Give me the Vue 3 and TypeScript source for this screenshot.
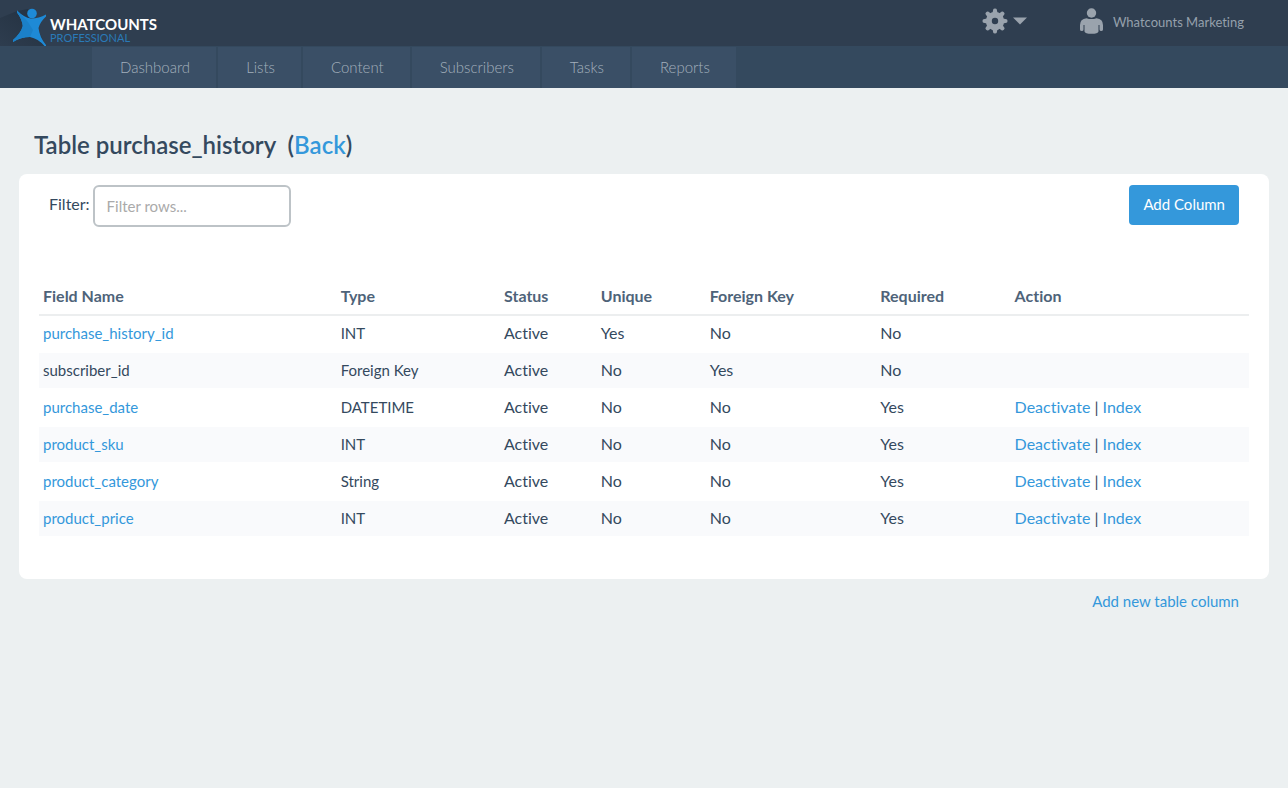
<script setup lang="ts">
import { computed, ref } from 'vue'

interface Field {
  name: string
  type: string
  unique: string
  foreign: string
  required: string
  linked: boolean
  actions: boolean
}

const navItems: string[] = ['Dashboard', 'Lists', 'Content', 'Subscribers', 'Tasks', 'Reports']
const headings: string[] = ['Field Name', 'Type', 'Status', 'Unique', 'Foreign Key', 'Required', 'Action']

const fields: Field[] = [
  { name: 'purchase_history_id', type: 'INT', unique: 'Yes', foreign: 'No', required: 'No', linked: true, actions: false },
  { name: 'subscriber_id', type: 'Foreign Key', unique: 'No', foreign: 'Yes', required: 'No', linked: false, actions: false },
  { name: 'purchase_date', type: 'DATETIME', unique: 'No', foreign: 'No', required: 'Yes', linked: true, actions: true },
  { name: 'product_sku', type: 'INT', unique: 'No', foreign: 'No', required: 'Yes', linked: true, actions: true },
  { name: 'product_category', type: 'String', unique: 'No', foreign: 'No', required: 'Yes', linked: true, actions: true },
  { name: 'product_price', type: 'INT', unique: 'No', foreign: 'No', required: 'Yes', linked: true, actions: true },
]

const filter = ref('')
const rows = computed(() =>
  fields.filter((f) => `${f.name} ${f.type}`.toLowerCase().includes(filter.value.toLowerCase())),
)
</script>

<template>
  <div class="page">
    <header class="topbar">
      <a href="#" class="brand" aria-label="WhatCounts Professional">
        <svg class="mark" width="50" height="46" viewBox="0 0 50 46" aria-hidden="true">
          <defs>
            <linearGradient id="shade" x1="1" y1="0" x2="0" y2="1">
              <stop offset="0" stop-color="#1d2a38" stop-opacity="0.7" />
              <stop offset="1" stop-color="#1d2a38" stop-opacity="0.05" />
            </linearGradient>
          </defs>
          <path d="M0 18L17 11L28 9L46 46H0Z" fill="url(#shade)" />
          <circle cx="32" cy="13.5" r="4.800" fill="#1e8ad6" />
          <path d="M17 10.500Q24 17.500 31 18.500Q39 18.500 46 14.500V16.500Q40 22 38.500 28Q39.500 37 46 45V46H44.500Q38 38.500 30 37Q21 37 13 42V40Q21 33 22.800 26Q22 19 17 12.500Z" fill="#1e8ad6" />
          <path d="M17 10.500Q24 17.500 28 22L33 30L30 37Q21 37 13 42V40Q21 33 22.800 26Q22 19 17 12.500Z" fill="#1b80c8" />
        </svg>
        <span class="wordmark">
          <span class="brand-name">WHATCOUNTS</span>
          <span class="brand-tier">PROFESSIONAL</span>
        </span>
      </a>
      <div class="tools">
        <button type="button" class="settings" aria-label="Settings">
          <svg width="26" height="26" viewBox="0 0 26 26" aria-hidden="true">
            <g fill="#9aa3ad">
              <path fill-rule="evenodd" d="M13 3.800a9.200 9.200 0 1 0 0 18.400a9.200 9.200 0 1 0 0-18.400ZM13 9.800a3.200 3.200 0 1 1 0 6.400a3.200 3.200 0 1 1 0-6.400Z" />
              <path v-for="n in 8" :key="n" d="M10.300 6L11.200 1.500Q11.400 .5 13 .5T14.800 1.500L15.700 6Z" :transform="`rotate(${n * 45} 13 13)`" />
            </g>
          </svg>
          <svg width="14" height="8" viewBox="0 0 14 8" aria-hidden="true">
            <path d="M0 .5H14L7 7.500Z" fill="#9aa3ad" />
          </svg>
        </button>
        <a href="#" class="account">
          <svg width="24" height="26" viewBox="0 0 24 26" aria-hidden="true">
            <g fill="#9aa3ad">
              <circle cx="11.500" cy="5" r="4.700" />
              <path d="M6.500 10.200Q0 11 0 17V21.500Q0 23 1.800 23T3.500 21.500V17H4.500V23.500Q5 25.800 11.500 25.800T18.500 23.500V17H19.500V21.500Q19.500 23 21.200 23T23 21.500V17Q23 11 16.500 10.200Q11.500 12 6.500 10.200Z" />
            </g>
          </svg>
          <span>Whatcounts Marketing</span>
        </a>
      </div>
    </header>

    <nav class="nav">
      <a v-for="item in navItems" :key="item" href="#">{{ item }}</a>
    </nav>

    <main class="content">
      <h1>Table purchase_history&nbsp; (<a href="#">Back</a>)</h1>

      <section class="panel">
        <div class="toolbar">
          <div class="filter">
            <label for="filter">Filter:</label>
            <input id="filter" v-model="filter" type="text" placeholder="Filter rows..." />
          </div>
          <button type="button" class="add">Add Column</button>
        </div>

        <table>
          <colgroup>
            <col class="c-name" />
            <col class="c-type" />
            <col class="c-status" />
            <col class="c-unique" />
            <col class="c-foreign" />
            <col class="c-required" />
            <col />
          </colgroup>
          <thead>
            <tr>
              <th v-for="h in headings" :key="h" scope="col">{{ h }}</th>
            </tr>
          </thead>
          <tbody>
            <tr v-for="f in rows" :key="f.name">
              <td class="compact">
                <a v-if="f.linked" href="#">{{ f.name }}</a>
                <template v-else>{{ f.name }}</template>
              </td>
              <td class="compact">{{ f.type }}</td>
              <td>Active</td>
              <td>{{ f.unique }}</td>
              <td>{{ f.foreign }}</td>
              <td>{{ f.required }}</td>
              <td>
                <template v-if="f.actions"><a href="#">Deactivate</a> | <a href="#">Index</a></template>
              </td>
            </tr>
          </tbody>
        </table>
      </section>

      <div class="below">
        <a href="#">Add new table column</a>
      </div>
    </main>
  </div>
</template>

<style>
body {
  background: #ecf0f1;
}
</style>

<style scoped>
.page {
  font-family: Lato, "Liberation Sans", sans-serif;
  font-size: 16px;
  font-variant-ligatures: none;
  line-height: 20px;
  color: #34495e;
}

a {
  color: #3498db;
  text-decoration: none;
}

.topbar {
  display: flex;
  justify-content: space-between;
  height: 46px;
  background: #2f3e50;
}

.brand {
  display: flex;
}

.wordmark {
  display: flex;
  flex-direction: column;
  padding-top: 16px;
}

.brand-name {
  font-size: 15px;
  font-weight: 700;
  line-height: 16px;
  color: #fff;
}

.brand-tier {
  font-size: 11px;
  line-height: 11px;
  color: #2a7ab8;
}

.tools {
  display: flex;
  align-items: center;
  gap: 53px;
  padding: 0 44px 4px 0;
}

.settings {
  display: flex;
  align-items: center;
  gap: 5px;
  padding: 0;
  border: 0;
  background: none;
}

.account {
  display: flex;
  align-items: center;
  gap: 9px;
  font-size: 13px;
  color: #95a0ac;
}

.account span {
  padding-top: 2px;
}

.nav {
  display: flex;
  gap: 2px;
  padding: 1px 0 0 92px;
  background: #34495e;
}

.nav a {
  padding: 10px 26px 11px 28px;
  background: #3a4f66;
  font-size: 15px;
  font-weight: 300;
  color: #a3b0bc;
}

.content {
  padding: 40px 19px 0;
}

h1 {
  margin: 0 0 12px;
  padding-left: 15px;
  font-size: 24px;
  font-weight: 600;
  line-height: 34px;
}

.panel {
  padding: 11px 20px 41px;
  border-radius: 8px;
  background: #fff;
}

.toolbar {
  display: flex;
  justify-content: space-between;
  align-items: flex-start;
  padding: 0 10px;
}

.filter {
  display: flex;
  gap: 3px;
}

.filter label {
  padding-top: 9px;
}

.filter input {
  box-sizing: border-box;
  width: 198px;
  height: 42px;
  padding: 0 12px;
  border: 2px solid #bdc3c7;
  border-radius: 6px;
  background: #fff;
  font-family: inherit;
  font-size: 15px;
  color: #34495e;
}

.filter input::placeholder {
  color: #aaa;
  opacity: 1;
}

.add {
  height: 40px;
  padding: 0 14px 2px;
  border: 0;
  border-radius: 4px;
  background: #3498db;
  font-family: inherit;
  font-size: 15px;
  color: #fff;
}

table {
  width: 100%;
  margin-top: 50px;
  border-collapse: separate;
  border-spacing: 0;
  table-layout: fixed;
}

.c-name { width: 24.6%; }
.c-type { width: 13.5%; }
.c-status { width: 8%; }
.c-unique { width: 9%; }
.c-foreign { width: 14.1%; }
.c-required { width: 11.1%; }

th {
  padding: 9px 4px 8px;
  border-bottom: 2px solid #eceeef;
  font-weight: 700;
  text-align: left;
  color: #4e6379;
}

td {
  height: 20px;
  padding: 7px 4px 8px;
  border-bottom: 2px solid #fff;
}

.compact {
  font-size: 15px;
}

tbody tr:nth-child(even) td {
  background: #f9fafc;
  background-clip: padding-box;
}

.below {
  padding: 12px 30px 0 0;
  font-size: 15px;
  text-align: right;
}
</style>
